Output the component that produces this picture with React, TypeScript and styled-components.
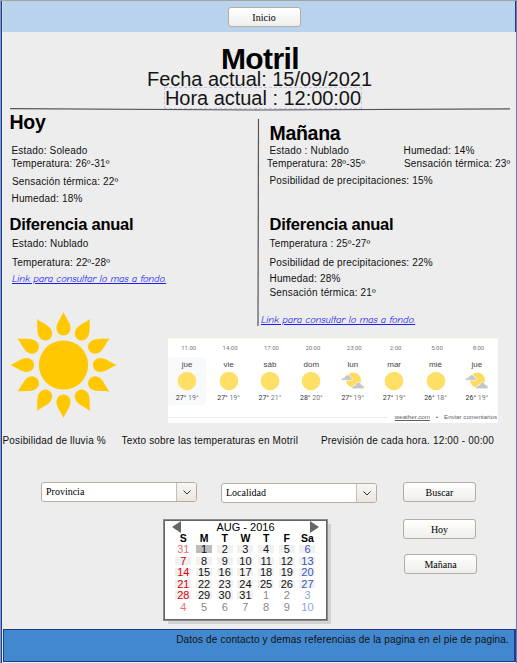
import React from "react";
import styled, { createGlobalStyle } from "styled-components";

const sans = `"Liberation Sans", Arial, sans-serif`;
const serif = `"Liberation Serif", "Times New Roman", serif`;

const GlobalStyle = createGlobalStyle`
  * { box-sizing: border-box; }
  body { margin: 0; background: #ededed; font-family: ${sans}; color: #000; }
`;

const Page = styled.div`
  width: 517px;
  height: 663px;
  display: flex;
  flex-direction: column;
  overflow: hidden;
  padding-left: 2px;
  background: linear-gradient(90deg, #7f9bd0 1px, #1f3d8c 1px 2px, #ededed 2px);
  border-right: 1px solid #6f76b8;
  border-top: 1px solid #a3a3a3;
`;

const TopBar = styled.header`
  flex: none;
  height: 31px;
  display: flex;
  justify-content: center;
  padding: 6px 0 0 10px;
  background: #b9d3ed;
  border-right: 1px solid #1f3c8c;
  border-left: 1px solid #d3e0ee;
`;

const Button = styled.button`
  flex: none;
  width: 73px;
  height: 20px;
  padding: 0;
  border: 1px solid #b5aca2;
  border-radius: 3px;
  background: linear-gradient(#ffffff, #eeeeec);
  font: 10px/17px ${serif};
  color: #000;
`;

const Heading = styled.section`
  flex: none;
  height: 76px;
  display: flex;
  flex-direction: column;
  align-items: center;
  padding-top: 14px;
`;

const City = styled.h1`
  margin: 0;
  padding-left: 2px;
  height: 24px;
  font: bold 30px/26px ${sans};
  letter-spacing: -0.6px;
`;

const DateLine = styled.div`
  height: 18px;
  padding-left: 1px;
  font-size: 20px;
  line-height: 19px;
  letter-spacing: -0.03px;
  color: #151515;
`;

const TimeLine = styled.div`
  margin: -1px 0 0 8px;
  height: 22px;
  border: 1px dashed #c9c3f0;
  font-size: 20px;
  line-height: 21px;
  letter-spacing: -0.03px;
  color: #151515;
`;

const Rule = styled.svg`
  flex: none;
  display: block;
  width: 514px;
  height: 4px;
`;

const Columns = styled.main`
  flex: none;
  height: 216px;
  display: grid;
  grid-template-columns: 252px 6px 256px;
`;

const Column = styled.section`
  display: flex;
  flex-direction: column;
  align-items: flex-start;
`;

const Title = styled.h2<{ $top: number; $left: number; $large?: boolean }>`
  margin: ${(p) => p.$top}px 0 0 ${(p) => p.$left}px;
  font-size: ${(p) => (p.$large ? 19.5 : 16.5)}px;
  line-height: 20px;
  letter-spacing: ${(p) => (p.$large ? -0.3 : -0.22)}px;
  white-space: nowrap;
`;

const Line = styled.div<{ $top?: number; $left?: number }>`
  flex: none;
  height: 12px;
  margin: ${(p) => p.$top ?? 0}px 0 0 ${(p) => p.$left ?? 0}px;
  font-size: 10px;
  line-height: 12px;
  letter-spacing: 0.17px;
  white-space: nowrap;
  color: #111;
`;

const Pair = styled.div<{ $top: number; $split: string }>`
  flex: none;
  display: grid;
  grid-template-columns: ${(p) => p.$split} auto;
  margin-top: ${(p) => p.$top}px;
`;

const Link = styled.a<{ $top: number; $left: number }>`
  margin: ${(p) => p.$top}px 0 0 ${(p) => p.$left}px;
  font: italic 10.5px/14px "Comic Neue", "Comic Sans MS", "Open Sans", sans-serif;
  letter-spacing: -0.15px;
  color: #1c1cf5;
  text-decoration: underline;
  white-space: nowrap;
`;

const Visuals = styled.section`
  flex: none;
  height: 98px;
  display: flex;
  align-items: flex-start;
  padding-left: 8px;
`;

const SunArt = styled.svg`
  flex: none;
  width: 107px;
  height: 106px;
  margin-top: -16px;
`;

const Forecast = styled.div`
  margin: 10px 0 0 51px;
  width: 330px;
  height: 85px;
  background: #fff;
  border-top: 1px solid #fbf8e4;
  color: #5f6166;
`;

const Days = styled.div`
  display: grid;
  grid-template-columns: repeat(8, 41.4px);
  height: 78px;
  margin-left: -1.5px;
`;

const Day = styled.div`
  display: flex;
  flex-direction: column;
  align-items: center;
  padding-top: 4px;
`;

const Hour = styled.span`
  padding-left: 3px;
  font: 6px/10px Roboto, sans-serif;
  color: #777;
`;

const DayCard = styled.div<{ $active: boolean }>`
  width: 38px;
  height: 48px;
  margin-top: 4px;
  display: flex;
  flex-direction: column;
  align-items: center;
  border-radius: 4px;
  background: ${(p) => (p.$active ? "#f8f9fb" : "transparent")};
  svg { flex: none; }
`;

const DayName = styled.span`
  height: 14px;
  font: 8px/16px ${sans};
  color: #444;
`;

const Temps = styled.span`
  margin-top: 2px;
  font: 7px/10px Roboto, sans-serif;
  color: #333;
  white-space: pre;
`;

const Low = styled.span`
  color: #777;
`;

const Source = styled.div`
  margin-top: -5px;
  display: flex;
  align-items: center;
  height: 10px;
  padding-right: 1px;
  font: 6.2px/10px ${sans};
  white-space: nowrap;
  &::before { content: ""; flex: 1; height: 1px; background: #ebebeb; margin-right: 7px; }
`;

const Site = styled.span`
  text-decoration: underline;
`;

const Dot = styled.span`
  margin: 0 6px;
`;

const Captions = styled.div`
  flex: none;
  display: grid;
  grid-template-columns: 119px 199.5px auto;
  margin: 9px 0 0 0.5px;
`;

const Select = styled.div<{ $top?: number }>`
  width: 156px;
  height: 20px;
  margin-top: ${(p) => p.$top ?? 0}px;
  display: flex;
  border: 1px solid #b5aca2;
  border-radius: 3px;
  background: #fff;
  overflow: hidden;
`;

const SelectText = styled.span`
  flex: 1;
  padding-left: 4px;
  font: 10px/18px ${serif};
`;

const Arrow = styled.span`
  width: 20px;
  display: flex;
  align-items: center;
  justify-content: center;
  border-left: 1px solid #c7bfb5;
  background: linear-gradient(#f8f7f5, #eae6df);
`;

const Controls = styled.section`
  flex: none;
  display: flex;
  height: 147px;
  margin-top: 35px;
  padding-left: 39px;
`;

const Actions = styled.div`
  margin-left: 26px;
  display: flex;
  flex-direction: column;
  gap: 17px;
  button:last-child { margin: -2px 0 0 1px; }
`;

const Fields = styled.div`
  width: 336px;
`;

const Selects = styled.div`
  display: flex;
  gap: 24px;
`;

const Calendar = styled.div`
  width: 163px;
  height: 100px;
  margin: 17px 0 0 123px;
  border: 1px solid #656565;
  outline: 0.5px solid #8a8a8a;
  background: #fff;
  box-shadow: 4px 4px 0 #d2d2d2;
`;

const Month = styled.div`
  display: flex;
  align-items: center;
  justify-content: space-between;
  height: 11px;
  padding: 0 7px;
  font-size: 11px;
`;

const Grid = styled.div`
  display: grid;
  grid-template-columns: repeat(7, 20.7px);
  grid-template-rows: 11px repeat(6, 11.6px);
  padding-left: 8px;
`;

const WeekDay = styled.span`
  font: bold 10.5px/12px ${sans};
  text-align: center;
`;

const DateCell = styled.span<{ $color: string; $bg: string }>`
  display: flex;
  align-items: center;
  justify-content: center;
  height: 8px;
  width: 16px;
  margin: 2px auto 0;
  font-size: 11px;
  line-height: 8px;
  color: ${(p) => p.$color};
  background: ${(p) => p.$bg};
`;

const Footer = styled.footer`
  flex: none;
  height: 33px;
  margin-left: 1px;
  border: 1px solid #1f3d8f;
  border-right-width: 2px;
  background: #4288cf;
  display: flex;
  justify-content: flex-end;
  padding: 4px 5px 0 0;
`;

const rays = Array.from({ length: 12 }, (_, i) => i * 30);

const Sun = () => (
  <SunArt viewBox="-53.5 -53 107 106">
    <g fill="#ffc800">
      <circle r="24.6" />
      {rays.map((a) => (
        <path key={a} transform={`rotate(${a})`} d="M0-53C2.500-47 7-42 7-37C7-32.500 4-29.500 0-29.500S-7-32.500-7-37C-7-42-2.500-47 0-53Z" />
      ))}
    </g>
  </SunArt>
);

const Weather = ({ cloudy }: { cloudy: boolean }) => (
  <svg width="24" height="20" viewBox="0 0 24 20">
    {cloudy ? (
      <>
        <circle cx="12.500" cy="9" r="7.500" fill="#ffdc60" />
        <path d="M0 9.300C0 7 2 7 3.500 6.600C4.500 3 9 3 9.500 6.500C11.500 6.500 12 9.300 11 9.300Z" fill="#c5c6ca" stroke="#fff" strokeWidth=".6" />
        <path d="M11 17.800C10.500 15 12.500 14.500 14.500 14.200C15 10.500 19.500 10.500 20 13.500C23 13.500 24 17.800 22 17.800Z" fill="#c5c6ca" stroke="#fff" strokeWidth=".6" />
      </>
    ) : (
      <circle cx="12" cy="10" r="9.300" fill="#ffdf66" />
    )}
  </svg>
);

const forecast: [string, string, number, number, boolean][] = [
  ["11:00", "jue", 27, 19, false],
  ["14:00", "vie", 27, 19, false],
  ["17:00", "sáb", 27, 21, false],
  ["20:00", "dom", 28, 20, false],
  ["23:00", "lun", 27, 19, true],
  ["2:00", "mar", 27, 19, false],
  ["5:00", "mié", 26, 18, false],
  ["8:00", "jue", 26, 19, true],
];

const dates = Array.from({ length: 42 }, (_, i) => {
  const inMonth = i > 0 && i < 32;
  const col = i % 7;
  const day = i === 0 ? 31 : inMonth ? i : i - 31;
  const color =
    col === 0 ? (inMonth ? "#e00000" : "#f07070") : col === 6 ? (inMonth ? "#3457c4" : "#8ea4e2") : inMonth ? "#111" : "#888";
  const bg = i === 1 ? "#bcbcbc" : inMonth ? "#f1f1f1" : "transparent";
  return { i, day, color, bg };
});

const Dropdown = ({ label, top }: { label: string; top?: number }) => (
  <Select $top={top}>
    <SelectText>{label}</SelectText>
    <Arrow>
      <svg width="8" height="5" viewBox="0 0 8 5">
        <path d="M.5.5L4 4L7.500.5" fill="none" stroke="#333" />
      </svg>
    </Arrow>
  </Select>
);

export default function App() {
  return (
    <>
      <GlobalStyle />
      <Page>
        <TopBar>
          <Button>Inicio</Button>
        </TopBar>
        <Heading>
          <City>Motril</City>
          <DateLine>Fecha actual: 15/09/2021</DateLine>
          <TimeLine>Hora actual : 12:00:00</TimeLine>
        </Heading>
        <Rule viewBox="0 0 514 4">
          <path d="M8 .7L258 2L508 .8" fill="none" stroke="#555" strokeWidth="1.2" />
        </Rule>
        <Columns>
          <Column>
            <Title $large $top={0} $left={7.5}>Hoy</Title>
            <Line $top={13} $left={9.5}>Estado: Soleado</Line>
            <Line $top={1} $left={9.5}>Temperatura: 26º-31º</Line>
            <Line $top={6} $left={10}>Sensación térmica: 22º</Line>
            <Line $top={5} $left={9.5}>Humedad: 18%</Line>
            <Title $top={9} $left={7.5}>Diferencia anual</Title>
            <Line $top={4} $left={10}>Estado: Nublado</Line>
            <Line $top={7} $left={10}>Temperatura: 22º-28º</Line>
            <Link $top={3} $left={10}>Link para consultar lo mas a fondo.</Link>
          </Column>
          <svg width="6" height="216" viewBox="0 0 6 216">
            <path d="M4.500 7L4 214" stroke="#555" strokeWidth="1.200" />
          </svg>
          <Column>
            <Title $large $top={11} $left={9.5}>Mañana</Title>
            <Pair $top={2} $split="143px">
              <Line $left={9.5}>Estado : Nublado</Line>
              <Line $left={0.5}>Humedad: 14%</Line>
            </Pair>
            <Pair $top={1} $split="143px">
              <Line $left={7}>Temperatura: 28º-35º</Line>
              <Line $left={1}>Sensación térmica: 23º</Line>
            </Pair>
            <Line $top={5} $left={9.5}>Posibilidad de precipitaciones: 15%</Line>
            <Title $top={27} $left={9.5}>Diferencia anual</Title>
            <Line $top={4} $left={9.5}>Temperatura : 25º-27º</Line>
            <Line $top={7} $left={9.5}>Posibilidad de precipitaciones: 22%</Line>
            <Line $top={4} $left={9.5}>Humedad: 28%</Line>
            <Line $top={2} $left={9.5}>Sensación térmica: 21º</Line>
            <Link $top={14} $left={1}>Link para consultar lo mas a fondo.</Link>
          </Column>
        </Columns>
        <Visuals>
          <Sun />
          <Forecast>
            <Days>
              {forecast.map(([hour, name, high, low, cloudy], i) => (
                <Day key={i}>
                  <Hour>{hour}</Hour>
                  <DayCard $active={i === 0}>
                    <DayName>{name}</DayName>
                    <Weather cloudy={cloudy} />
                    <Temps>{high}° <Low>{low}°</Low></Temps>
                  </DayCard>
                </Day>
              ))}
            </Days>
            <Source>
              <Site>weather.com</Site>
              <Dot>•</Dot>
              <span>Enviar comentarios</span>
            </Source>
          </Forecast>
        </Visuals>
        <Captions>
          <Line>Posibilidad de lluvia %</Line>
          <Line>Texto sobre las temperaturas en Motril</Line>
          <Line>Previsión de cada hora. 12:00 - 00:00</Line>
        </Captions>
        <Controls>
          <Fields>
            <Selects>
              <Dropdown label="Provincia" />
              <Dropdown label="Localidad" top={1} />
            </Selects>
            <Calendar>
              <Month>
                <svg width="9" height="12" viewBox="0 0 9 12"><path d="M9 0V12L0 6Z" fill="#666" /></svg>
                AUG - 2016
                <svg width="9" height="12" viewBox="0 0 9 12"><path d="M0 0V12L9 6Z" fill="#666" /></svg>
              </Month>
              <Grid>
                {["S", "M", "T", "W", "T", "F", "Sa"].map((d, i) => (
                  <WeekDay key={i}>{d}</WeekDay>
                ))}
                {dates.map((d) => (
                  <DateCell key={`d${d.i}`} $color={d.color} $bg={d.bg}>{d.day}</DateCell>
                ))}
              </Grid>
            </Calendar>
          </Fields>
          <Actions>
            <Button>Buscar</Button>
            <Button>Hoy</Button>
            <Button>Mañana</Button>
          </Actions>
        </Controls>
        <Footer>
          <Line>Datos de contacto y demas referencias de la pagina en el pie de pagina.</Line>
        </Footer>
      </Page>
    </>
  );
}
